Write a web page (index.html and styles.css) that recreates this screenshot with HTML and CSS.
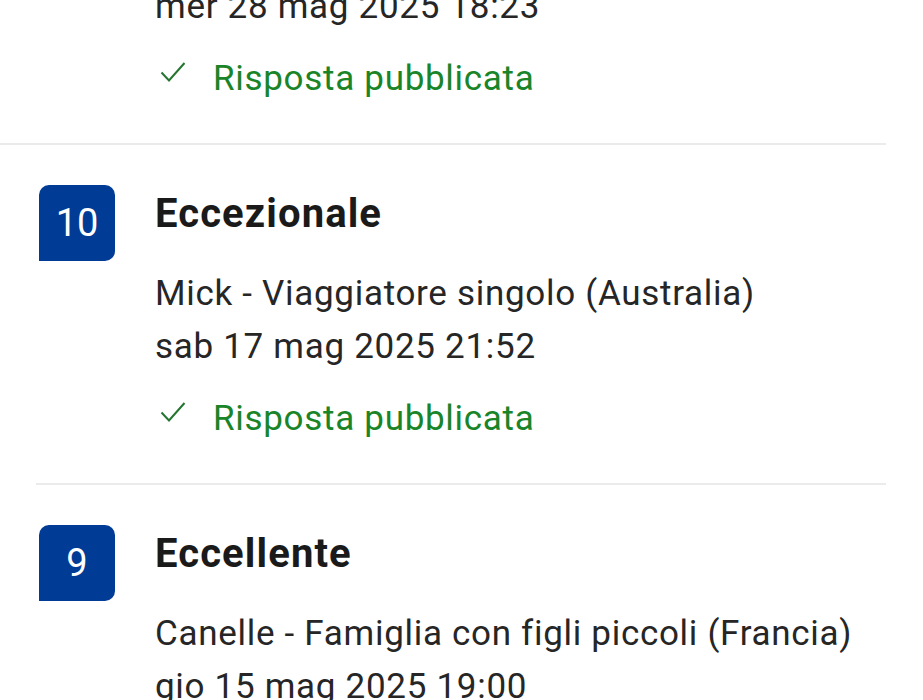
FILE: index.html
```html
<!DOCTYPE html>
<html lang="it">
<head>
<meta charset="utf-8">
<link rel="stylesheet" href="styles.css">
</head>
<body>
<div class="list">
  <div class="review review--cut">
    <div class="badge-space"></div>
    <div class="content">
      <div class="meta">mer 28 mag 2025 18:23</div>
      <div class="reply">
        <svg class="check" viewBox="0 0 26 22" width="26" height="22"><path d="M1.5 11.5 L9 19.5 L24.5 2" fill="none" stroke="#23752f" stroke-width="2"/></svg>
        <span>Risposta pubblicata</span>
      </div>
    </div>
  </div>
  <div class="divider divider--full"></div>
  <div class="review">
    <div class="badge">10</div>
    <div class="content">
      <div class="title">Eccezionale</div>
      <div class="meta">Mick - Viaggiatore singolo (Australia)<br>sab 17 mag 2025 21:52</div>
      <div class="reply">
        <svg class="check" viewBox="0 0 26 22" width="26" height="22"><path d="M1.5 11.5 L9 19.5 L24.5 2" fill="none" stroke="#23752f" stroke-width="2"/></svg>
        <span>Risposta pubblicata</span>
      </div>
    </div>
  </div>
  <div class="divider"></div>
  <div class="review">
    <div class="badge">9</div>
    <div class="content">
      <div class="title">Eccellente</div>
      <div class="meta">Canelle - Famiglia con figli piccoli (Francia)<br>gio 15 mag 2025 19:00</div>
    </div>
  </div>
</div>
</body>
</html>
```

FILE: styles.css
```css
html, body {
  margin: 0;
  padding: 0;
  background: #ffffff;
  overflow: hidden;
}
body {
  width: 923px;
  height: 700px;
  font-family: Roboto, "Liberation Sans", sans-serif;
  color: #1a1a1a;
}
.list {
  display: flex;
  flex-direction: column;
  margin-top: -20px;
}
.review {
  display: flex;
  padding: 40px 0 41px 39px;
  gap: 40px;
}
.review--cut {
  padding-top: 0;
}
.badge-space {
  width: 76px;
  flex: none;
}
.badge {
  width: 76px;
  height: 76px;
  flex: none;
  background: #003b95;
  color: #ffffff;
  border-radius: 10px 10px 10px 0;
  display: flex;
  align-items: center;
  justify-content: center;
  font-size: 38px;
}
.content {
  display: flex;
  flex-direction: column;
}
.title {
  font-size: 40px;
  font-weight: 700;
  letter-spacing: 1.1px;
  line-height: 58px;
  color: #1a1a1a;
}
.meta {
  margin-top: 24px;
  font-size: 35px;
  letter-spacing: 0.7px;
  line-height: 53px;
  color: #262626;
}
.review--cut .meta {
  margin-top: 0;
}
.reply {
  margin-top: 21px;
  display: flex;
  align-items: center;
  height: 48px;
  font-size: 35px;
  letter-spacing: 0.7px;
  color: #1a8428;
}
.check {
  margin-left: 5px;
  margin-right: 27px;
  margin-top: -12px;
}
.divider {
  height: 2px;
  background: #ebebeb;
  margin: 0 37px 0 36px;
}
.divider--full {
  margin-left: 0;
}
```
